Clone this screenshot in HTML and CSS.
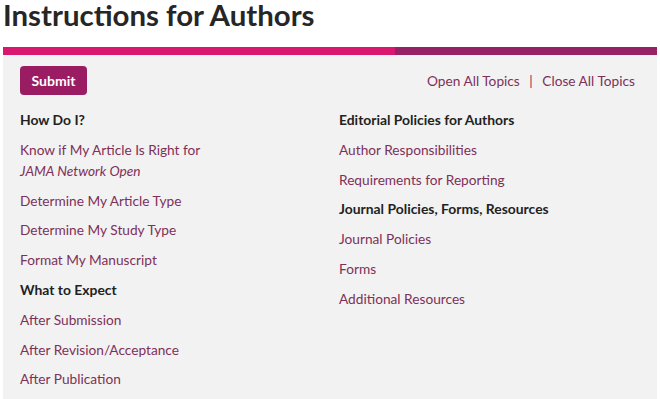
FILE: index.html
```html
<!DOCTYPE html>
<html lang="en">
  <head>
    <meta charset="UTF-8" />
    <meta name="viewport" content="width=device-width, initial-scale=1.0" />
    <title>Instructions for Authors</title>
    <link rel="stylesheet" href="styles.css">
  </head>
  <body>
    <h1 class="page-title">Instructions for Authors</h1>
    <div class="title-bar">
      <div class="bar-pink"></div>
      <div class="bar-purple"></div>
    </div>
    <div class="panel">
      <div class="panel-top">
        <a class="submit-btn" href="#">Submit</a>
        <div class="toggle-links">
          <a href="#">Open All Topics</a>
          <span class="sep">|</span>
          <a href="#">Close All Topics</a>
        </div>
      </div>
      <div class="topics">
        <div class="topic-col">
          <h3>How Do I?</h3>
          <a href="#">Know if My Article Is Right for<br /><em>JAMA Network Open</em></a>
          <a href="#">Determine My Article Type</a>
          <a href="#">Determine My Study Type</a>
          <a href="#">Format My Manuscript</a>
          <h3>What to Expect</h3>
          <a href="#">After Submission</a>
          <a href="#">After Revision/Acceptance</a>
          <a href="#">After Publication</a>
        </div>
        <div class="topic-col">
          <h3>Editorial Policies for Authors</h3>
          <a href="#">Author Responsibilities</a>
          <a href="#">Requirements for Reporting</a>
          <h3>Journal Policies, Forms, Resources</h3>
          <a href="#">Journal Policies</a>
          <a href="#">Forms</a>
          <a href="#">Additional Resources</a>
        </div>
      </div>
    </div>
  </body>
</html>
```

FILE: styles.css
```css
html {
  box-sizing: border-box;
  margin: 0;
  padding: 0;
}
body {
  background-color: #ffffff;
  margin: 0;
  padding: 0;
  font-family: Lato, "Open Sans", sans-serif;
  color: #222222;
  overflow: hidden;
  height: 399px;
}
a {
  text-decoration: none;
  color: #7d3159;
}

.page-title {
  margin: 0;
  padding-left: 3px;
  font-size: 29.4px;
  line-height: 30px;
  font-weight: 700;
  color: #262626;
}

.title-bar {
  display: flex;
  height: 8px;
  margin: 17px 3px 0 3px;
}
.bar-pink {
  width: 392px;
  background-color: #d9176f;
}
.bar-purple {
  flex: 1;
  background-color: #962164;
}

.panel {
  margin: 0 3px;
  padding: 11px 22px 0 17px;
  background-color: #f2f2f2;
  height: 344px;
  overflow: hidden;
}

.panel-top {
  display: flex;
  justify-content: space-between;
  align-items: center;
}
.submit-btn {
  display: inline-block;
  width: 67px;
  height: 29px;
  line-height: 29px;
  text-align: center;
  border-radius: 4px;
  background-color: #9a1c62;
  color: #ffffff;
  font-size: 14px;
  font-weight: 700;
}
.toggle-links {
  font-size: 13.7px;
  color: #7d3159;
}
.toggle-links .sep {
  margin: 0 6px;
}

.topics {
  display: grid;
  grid-template-columns: 319px 1fr;
  margin-top: 14px;
}
.topic-col {
  display: flex;
  flex-direction: column;
  align-items: flex-start;
}
.topic-col h3,
.topic-col a {
  margin: 0 0 8.8px 0;
  font-size: 13.7px;
  line-height: 21px;
}
.topic-col h3 {
  font-size: 13.9px;
  font-weight: 700;
  color: #222222;
}
```
